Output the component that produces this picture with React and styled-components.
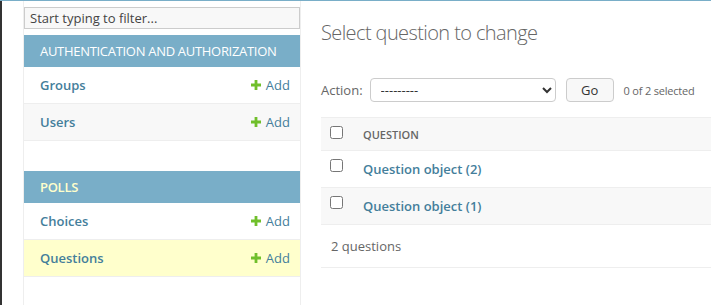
import React from 'react';
import styled, { createGlobalStyle } from 'styled-components';

const GlobalStyle = createGlobalStyle`
  html, body {
    margin: 0;
    padding: 0;
    background: #fff;
    font-family: "Open Sans", "Noto Sans", sans-serif;
    font-size: 13px;
    color: #333;
    overflow: hidden;
  }
`

const Page = styled.div`
  display: flex;
  height: 305px;
  border-top: 1px solid #79aec8;
`

const Toggle = styled.div`
  flex: 0 0 21px;
  border-left: 2px solid #333;
  border-right: 1px solid #eee;
`

const Sidebar = styled.nav`
  flex: 0 0 276px;
  border-right: 1px solid #eee;
  display: flex;
  flex-direction: column;
`

const Filter = styled.input`
  margin: 6px 0 6px 0;
  height: 22px;
  box-sizing: border-box;
  border: 1px solid #ccc;
  background: #f8f8f8;
  padding: 0 5px;
  font-family: inherit;
  font-size: 13px;
  color: #333;
  outline: none;

  &::placeholder {
    color: #444;
  }
`

const Module = styled.div`
  margin-bottom: ${p => (p.$last ? '0' : '30px')};
`

const Caption = styled.div`
  background: #79aec8;
  color: ${p => (p.$current ? '#ffc' : '#fff')};
  font-weight: ${p => (p.$current ? 600 : 400)};
  text-transform: uppercase;
  font-size: 13px;
  height: 32px;
  line-height: 32px;
  padding-left: 16px;
  letter-spacing: -0.3px;
`

const Row = styled.div`
  display: flex;
  align-items: center;
  justify-content: space-between;
  height: 36px;
  padding: 0 10px 0 16px;
  border-bottom: 1px solid #eee;
  background: ${p => (p.$current ? '#ffc' : p.$alt ? '#f8f8f8' : '#fff')};
`

const ModelLink = styled.a`
  color: #447e9b;
  font-weight: 600;
  text-decoration: none;
`

const AddLink = styled.a`
  display: flex;
  align-items: center;
  gap: 5px;
  color: #447e9b;
  text-decoration: none;
`

const Main = styled.main`
  flex: 1;
  padding: 0 0 0 20px;
  min-width: 0;
`

const Title = styled.h1`
  margin: 18px 0 0 0;
  font-size: 20px;
  font-weight: 300;
  color: #666;
  line-height: 28px;
  letter-spacing: -0.6px;
`

const Actions = styled.div`
  display: flex;
  align-items: center;
  margin-top: 31px;
  height: 24px;
  color: #666;
`

const ActionLabel = styled.label`
  margin-right: 7px;
`

const Select = styled.select`
  width: 186px;
  height: 24px;
  border: 1px solid #ccc;
  border-radius: 4px;
  background: #fff;
  font-family: inherit;
  font-size: 13px;
  color: #333;
  padding: 0 6px;
`

const GoButton = styled.button`
  margin-left: 10px;
  width: 48px;
  height: 24px;
  border: 1px solid #ccc;
  border-radius: 4px;
  background: #f8f8f8;
  font-family: inherit;
  font-size: 13px;
  color: #333;
  padding: 0;
`

const Counter = styled.span`
  margin-left: 10px;
  font-size: 11px;
  color: #666;
  letter-spacing: -0.2px;
`

const Table = styled.div`
  margin-top: 15px;
  border-top: 1px solid #eee;
`

const TableRow = styled.div`
  display: flex;
  align-items: center;
  height: ${p => (p.$head ? '32px' : '36px')};
  border-bottom: 1px solid #eee;
  background: ${p => (p.$alt ? '#f8f8f8' : '#fff')};
  padding-left: 9px;
`

const Check = styled.input`
  margin: 0;
  width: 13px;
  height: 13px;
  margin-top: ${p => (p.$head ? '-4px' : '-8px')};
`

const HeadText = styled.span`
  margin-left: 20px;
  font-size: 11px;
  font-weight: 600;
  color: #666;
  text-transform: uppercase;
`

const ObjectLink = styled.a`
  margin-left: 20px;
  color: #447e9b;
  font-weight: 600;
  text-decoration: none;
`

const Paginator = styled.div`
  height: 42px;
  line-height: 42px;
  padding-left: 10px;
  color: #666;
  border-bottom: 1px solid #eee;
`

function PlusIcon() {
  return (
    <svg width="10" height="10" viewBox="0 0 10 10">
      <path d="M3.6 0h2.8v3.6H10v2.8H6.4V10H3.6V6.4H0V3.6h3.6z" fill="#70bf2b" />
    </svg>
  );
}

const modules = [
  {
    name: 'Authentication and Authorization',
    models: ['Groups', 'Users'],
  },
  {
    name: 'Polls',
    current: true,
    models: ['Choices', 'Questions'],
  },
];

function App() {
  return (
    <>
      <GlobalStyle />
      <Page>
        <Toggle />
        <Sidebar>
          <Filter placeholder="Start typing to filter..." />
          {modules.map((mod, i) => (
            <Module key={mod.name} $last={i === modules.length - 1}>
              <Caption $current={mod.current}>{mod.name}</Caption>
              {mod.models.map((model, j) => (
                <Row
                  key={model}
                  $alt={j % 2 === 1 && !mod.current}
                  $current={model === 'Questions'}
                >
                  <ModelLink href="#">{model}</ModelLink>
                  <AddLink href="#">
                    <PlusIcon />
                    Add
                  </AddLink>
                </Row>
              ))}
            </Module>
          ))}
        </Sidebar>
        <Main>
          <Title>Select question to change</Title>
          <Actions>
            <ActionLabel>Action:</ActionLabel>
            <Select defaultValue="">
              <option value="">---------</option>
              <option value="delete">Delete selected questions</option>
            </Select>
            <GoButton>Go</GoButton>
            <Counter>0 of 2 selected</Counter>
          </Actions>
          <Table>
            <TableRow $head $alt>
              <Check type="checkbox" $head />
              <HeadText>Question</HeadText>
            </TableRow>
            <TableRow>
              <Check type="checkbox" />
              <ObjectLink href="#">Question object (2)</ObjectLink>
            </TableRow>
            <TableRow $alt>
              <Check type="checkbox" />
              <ObjectLink href="#">Question object (1)</ObjectLink>
            </TableRow>
          </Table>
          <Paginator>2 questions</Paginator>
        </Main>
      </Page>
    </>
  );
}

export default App;
